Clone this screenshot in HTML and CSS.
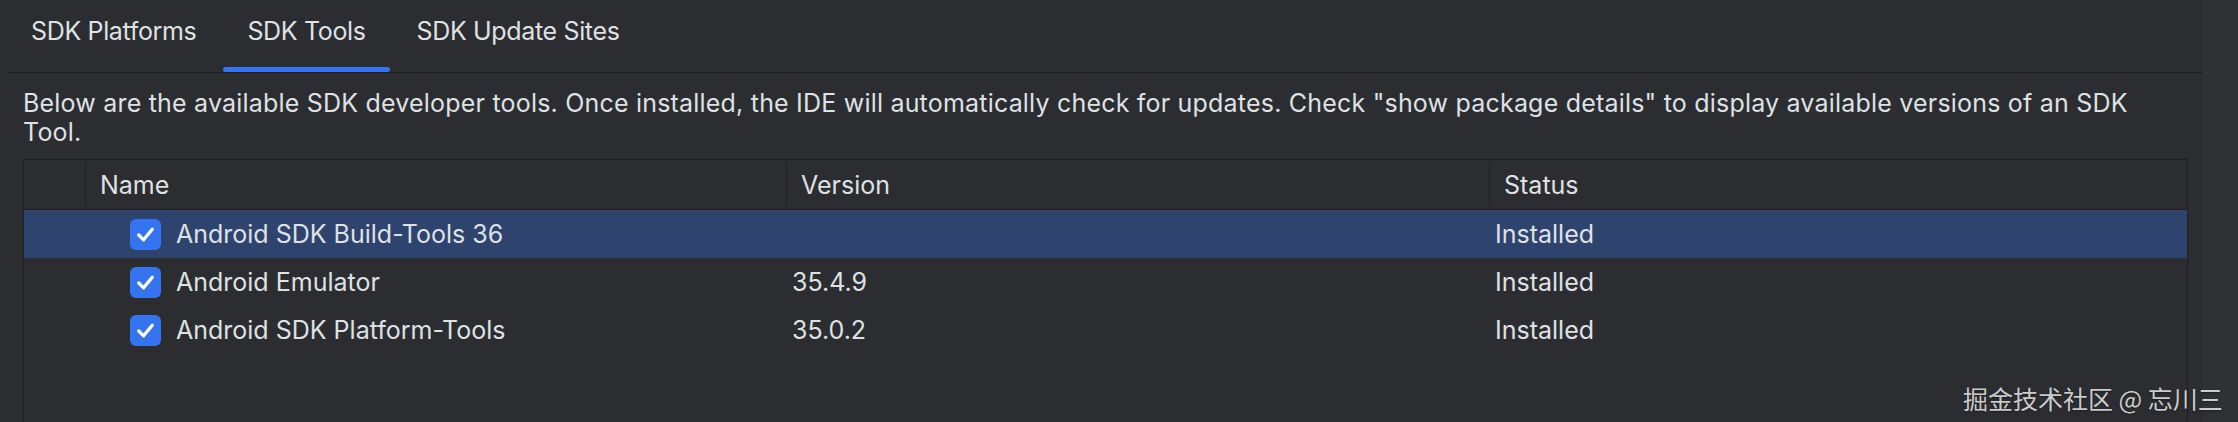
FILE: index.html
```html
<!DOCTYPE html>
<html lang="en">
<head>
<meta charset="utf-8">
<title>SDK Tools</title>
<link rel="stylesheet" href="styles.css">
</head>
<body>
<div class="page">
  <div class="main">
    <div class="tabbar">
      <div class="tab">SDK Platforms</div>
      <div class="tab active">SDK Tools</div>
      <div class="tab">SDK Update Sites</div>
    </div>
    <p class="desc">Below are the available SDK developer tools. Once installed, the IDE will automatically check for updates. Check "show package details" to display available versions of an SDK Tool.</p>
    <div class="table">
      <div class="thead">
        <div class="th th-first"></div>
        <div class="th">Name</div>
        <div class="th">Version</div>
        <div class="th">Status</div>
      </div>
      <div class="row selected">
        <div class="td"></div>
        <div class="td name"><span class="check"><svg viewBox="0 0 32 32" width="31" height="31"><path d="M9 16.5 L14 21.5 L23 10.5" fill="none" stroke="#fff" stroke-width="3.4" stroke-linecap="round" stroke-linejoin="round"/></svg></span>Android SDK Build-Tools 36</div>
        <div class="td ver"></div>
        <div class="td stat">Installed</div>
      </div>
      <div class="row">
        <div class="td"></div>
        <div class="td name"><span class="check"><svg viewBox="0 0 32 32" width="31" height="31"><path d="M9 16.5 L14 21.5 L23 10.5" fill="none" stroke="#fff" stroke-width="3.4" stroke-linecap="round" stroke-linejoin="round"/></svg></span>Android Emulator</div>
        <div class="td ver">35.4.9</div>
        <div class="td stat">Installed</div>
      </div>
      <div class="row">
        <div class="td"></div>
        <div class="td name"><span class="check"><svg viewBox="0 0 32 32" width="31" height="31"><path d="M9 16.5 L14 21.5 L23 10.5" fill="none" stroke="#fff" stroke-width="3.4" stroke-linecap="round" stroke-linejoin="round"/></svg></span>Android SDK Platform-Tools</div>
        <div class="td ver">35.0.2</div>
        <div class="td stat">Installed</div>
      </div>
    </div>
  </div>
  <div class="strip"></div>
</div>
<div class="watermark">掘金技术社区 @ 忘川三</div>
</body>
</html>
```

FILE: styles.css
```css
html, body {
  margin: 0;
  padding: 0;
  height: 100%;
  overflow: hidden;
  background: #2b2d30;
}
body {
  font-family: Inter, "Liberation Sans", "Noto Sans CJK SC", sans-serif;
  font-size: 25px;
  color: #dfe1e5;
  position: relative;
}
.page {
  display: flex;
  height: 100%;
}
.main {
  flex: 1;
  padding-left: 6px;
  display: flex;
  flex-direction: column;
  min-width: 0;
}
.strip {
  width: 35px;
  background: #303134;
}
.tabbar {
  display: flex;
  gap: 3px;
  height: 73px;
  box-sizing: border-box;
  padding-left: 1px;
  border-bottom: 1px solid #1e1f22;
  flex: none;
}
.tab {
  position: relative;
  display: flex;
  align-items: center;
  height: 62px;
  padding: 0 24px;
  letter-spacing: -0.35px;
}
.tab.active::after {
  content: "";
  position: absolute;
  left: 0;
  right: 0;
  top: 67px;
  height: 5px;
  border-radius: 3px;
  background: #3574f0;
}
.desc {
  margin: 16px 60px 0 17px;
  line-height: 29px;
  letter-spacing: 0.2px;
}
.table {
  margin: 12px 15px 0 17px;
  flex: 1;
  border: 1px solid #1e1f22;
  border-bottom: none;
}
.thead, .row {
  display: grid;
  grid-template-columns: 61px 701px 703px 1fr;
}
.thead {
  height: 50px;
  box-sizing: border-box;
  padding: 3px 0;
  border-bottom: 1px solid #1e1f22;
}
.th {
  display: flex;
  align-items: center;
  padding-left: 14px;
  border-left: 1px solid #1e1f22;
}
.th.th-first {
  border-left: none;
}
.row {
  height: 48px;
}
.row.selected {
  background: #2e436e;
}
.td {
  display: flex;
  align-items: center;
  padding-left: 6px;
}
.td.name {
  padding-left: 45px;
}
.check {
  display: inline-flex;
  width: 31px;
  height: 31px;
  border-radius: 6px;
  background: #3574f0;
  margin-right: 15px;
}
.watermark {
  position: absolute;
  left: 1963px;
  top: 380px;
  font-family: "Noto Sans CJK SC", sans-serif;
  font-size: 25px;
  line-height: 36px;
  color: rgba(235, 235, 235, 0.85);
  text-shadow: 0 1px 2px rgba(0,0,0,0.4);
  white-space: nowrap;
}
```
